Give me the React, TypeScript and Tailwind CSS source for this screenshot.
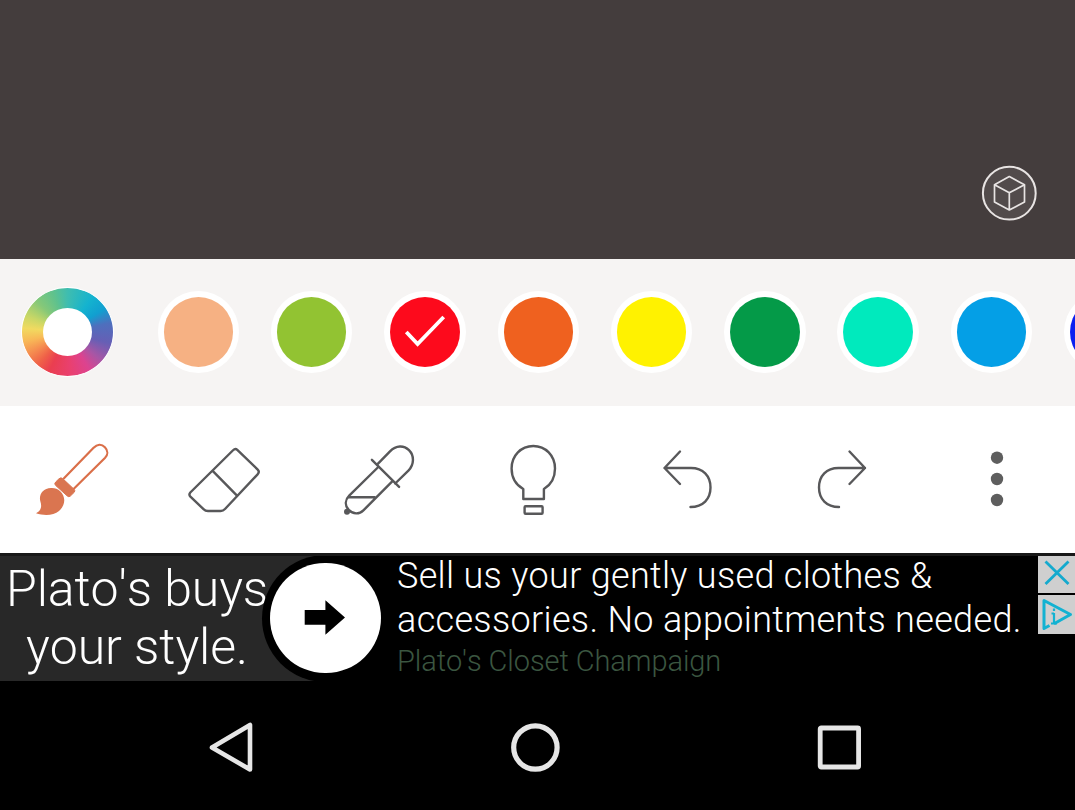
import type { ReactNode } from 'react';

const swatches = [
  { name: 'Peach', color: 'bg-[#f6b183]' },
  { name: 'Lime', color: 'bg-[#92c332]' },
  { name: 'Red', color: 'bg-[#fd0a1c]', selected: true },
  { name: 'Orange', color: 'bg-[#ef611f]' },
  { name: 'Yellow', color: 'bg-[#fff200]' },
  { name: 'Green', color: 'bg-[#049a48]' },
  { name: 'Mint', color: 'bg-[#00eabd]' },
  { name: 'Sky', color: 'bg-[#049fe6]' },
  { name: 'Blue', color: 'bg-[#0a1ff0]' },
];

function Tool({ label, children }: { label: string; children: ReactNode }) {
  return (
    <button aria-label={label} className="flex w-[154px] shrink-0 items-center justify-center">
      <svg
        width="90"
        height="90"
        viewBox="0 0 90 90"
        fill="none"
        stroke="#58585a"
        strokeWidth="2.4"
        strokeLinecap="round"
        strokeLinejoin="round"
      >
        {children}
      </svg>
    </button>
  );
}

function Canvas() {
  return (
    <main className="flex h-[259px] shrink-0 items-end justify-end bg-[#443d3d] pr-[38px] pb-[38px]">
      <button aria-label="3D view">
        <svg width="56" height="56" viewBox="0 0 56 56" fill="none" stroke="#e8e4e3" strokeLinejoin="round">
          <circle cx="28.3" cy="28.2" r="26.4" fill="#524b4b" strokeWidth="2" />
          <path d="M28.3 11.5 43.5 19.8V37L28.3 45 13.5 37V19.8ZM13.5 19.8 28.3 27.8 43.5 19.8M28.3 27.8V45" strokeWidth="1.7" />
        </svg>
      </button>
    </main>
  );
}

function Palette() {
  return (
    <section className="flex h-[147px] shrink-0 items-center overflow-hidden bg-[#f6f4f3] pb-[1px] pl-[21px]">
      <button
        aria-label="Color wheel"
        className="mr-[43.7px] flex h-[90px] w-[93px] shrink-0 items-center justify-center rounded-[50%] border border-white bg-[conic-gradient(from_0deg,#3fbdb0_0deg,#14b3cf_35deg,#119fd0_58deg,#4e6fbd_78deg,#665fb5_105deg,#a856a5_130deg,#dc438f_150deg,#e94070_175deg,#ea3e50_205deg,#ef6048_222deg,#f58c50_240deg,#f8b957_258deg,#f1da60_275deg,#c8d766_292deg,#86c878_315deg,#5fc28d_340deg,#3fbdb0_360deg)]"
      >
        <span className="h-[48px] w-[49px] rounded-[50%] bg-white" />
      </button>
      <div className="flex gap-[31.8px]">
        {swatches.map((s) => (
          <button
            key={s.name}
            aria-label={s.name}
            className="flex size-[81.5px] shrink-0 items-center justify-center rounded-full bg-white"
          >
            <span className={`flex size-[69.5px] items-center justify-center rounded-full ${s.color}`}>
              {s.selected && (
                <svg width="70" height="70" viewBox="0 0 70 70" fill="none" stroke="#fff" strokeWidth="3.8">
                  <path d="M16.4 35 27.8 47.2 54.1 19.9" />
                </svg>
              )}
            </span>
          </button>
        ))}
      </div>
    </section>
  );
}

function Toolbar() {
  return (
    <section className="-ml-[6px] flex h-[147px] w-[1081px] shrink-0 bg-white">
      <Tool label="Brush">
        <path
          d="M38 43.3 67.6 12.8C71.2 9.2 75.6 9 78.9 12.2C82.2 15.5 82 19.8 78.9 23L47.3 54.2"
          stroke="#da6f49"
          strokeWidth="2.2"
        />
        <path
          d="M33.2 43.6Q35 42 36.7 43.6L48.2 54.4Q49.5 55.8 48.2 57.3L44.3 61.1Q42.9 62.4 41.3 61L29.5 50.3Q28 48.9 29.4 47.3Z"
          fill="#da7550"
          stroke="#da7550"
          strokeWidth="1"
        />
        <path
          d="M25 53.1C16.5 53.3 12.5 60.5 14.4 66.5C16.6 73.5 13.5 76.5 10 78.2C18 80.9 27.6 80.6 33 76C39.6 70.3 40 61.6 34.2 56.2C31.6 53.7 28.5 52.9 25 53.1Z"
          fill="#da7550"
          stroke="none"
        />
      </Tool>
      <Tool label="Eraser">
        <path
          d="M54.5 16.6Q56.5 14.5 58.5 16.4L78.9 36.2Q81 38.3 79 40.7L46.2 75.6Q44.3 77.6 41.8 77.6H29.2Q26.6 77.6 24.7 75.7L11.6 63.3Q9.7 61.2 11.5 59.1ZM34.1 37.8 58.2 62.3"
          transform="translate(-1.2 -1.6)"
        />
      </Tool>
      <Tool label="Eyedropper">
        <path d="M43.3 29.3 56 16.3C62.2 10 70 10.2 75 15.2C80.4 20.6 80.3 29.5 74.4 35.7L61.2 48.5M44.3 32 15.2 60.7C11 64.9 10.6 70.4 14.7 74.9C19 79.4 25.2 79.6 29.4 75.4L58 46.7M15.3 62.3H40.5" />
        <path d="M37.9 24.8 65.1 51.9" />
        <circle cx="13" cy="76.8" r="1.8" fill="#58585a" />
      </Tool>
      <Tool label="Hints">
        <path
          d="M36 75V65C28.5 60.8 24.3 53.2 24.3 44.5C24.3 31.5 33.8 22 46 22S67.7 31.5 67.7 44.5C67.7 53.2 64 60.6 56.6 65V75Z"
          transform="translate(-.7 -11)"
        />
        <rect x="36.6" y="71.3" width="18" height="7.4" rx="1" />
      </Tool>
      <Tool label="Undo">
        <path d="M38 16.5 22.5 33 38 49M22.5 33H49C61 33 68.5 41 68.5 52.5S61 72 48.5 72" />
      </Tool>
      <Tool label="Redo">
        <path d="M53.5 16.5 69 33 53.5 49M69 33H42.5C30.5 33 23 41 23 52.5S30.5 72 43 72" />
      </Tool>
      <Tool label="More">
        <g fill="#5e5e5e" stroke="none">
          <circle cx="47" cy="22.7" r="6.2" />
          <circle cx="47" cy="44" r="6.2" />
          <circle cx="47" cy="65" r="6.2" />
        </g>
      </Tool>
    </section>
  );
}

function Banner() {
  return (
    <aside className="relative flex h-[128px] shrink-0 overflow-hidden border-t-[3px] border-[#191919] bg-black font-light text-white [font-kerning:none]">
      <div className="w-[325px] shrink-0 bg-[#282828] pt-[4px] pl-[6px] text-[50px] leading-[58px] whitespace-nowrap">
        <p className="tracking-[-0.1px]">Plato's buys</p>
        <p className="pl-[20px] leading-[59px] tracking-[-0.05px]">your style.</p>
      </div>
      <button aria-label="Open" className="absolute -top-[1.5px] left-[262px] flex size-[127px] items-center justify-center rounded-full bg-black">
        <span className="flex size-[110.5px] items-center justify-center rounded-full bg-white">
          <svg width="44" height="36" viewBox="0 0 44 36" fill="#000">
            <path d="M.7 10H21.4V.3L41 17.5 21.4 34.7V24.7H.7Z" />
          </svg>
        </span>
      </button>
      <div className="pl-[72px] whitespace-nowrap">
        <p className="-mt-[2px] text-[36px] leading-[44px] tracking-[0.31px]">Sell us your gently used clothes &amp;</p>
        <p className="text-[36px] leading-[44px] tracking-[0.33px]">accessories. No appointments needed.</p>
        <p className="text-[29px] leading-[39px] tracking-[-0.08px] text-[#3b5640]">Plato's Closet Champaign</p>
      </div>
      <div className="absolute -top-[3px] right-0 flex w-[37.5px] flex-col gap-[2px] bg-black">
        <button aria-label="Close ad" className="h-[40px] bg-[#cfcfcf]">
          <svg width="38" height="40" viewBox="0 0 38 40" stroke="#14aace" strokeWidth="2.8">
            <path d="M7.5 8.5 30.5 31M30.5 8.5 7.5 31" />
          </svg>
        </button>
        <button aria-label="Ad choices" className="h-[39px] bg-[#cfcfcf]">
          <svg width="38" height="39" viewBox="0 0 38 39" fill="none" stroke="#12b2d2" strokeWidth="3" strokeLinejoin="round">
            <path d="M11.5 30.5 6 33.5V5.5L32.5 19.5 16 28.7" />
            <path d="M16 18V29M16 13.5V16M13.5 18.5H16M13 28.5H19" strokeWidth="2.2" />
          </svg>
        </button>
      </div>
    </aside>
  );
}

function NavigationBar() {
  return (
    <nav className="flex flex-1 items-center justify-between bg-black pt-[1px] pr-[212px] pl-[208px]">
      <button aria-label="Back">
        <svg width="46" height="52" viewBox="0 0 46 52" fill="none" stroke="#e6e6e6" strokeWidth="4.6" strokeLinejoin="round">
          <path d="M42 5V49.5L4 27.5Z" />
        </svg>
      </button>
      <button aria-label="Home">
        <svg width="52" height="52" viewBox="0 0 52 52" fill="none" stroke="#e6e6e6" strokeWidth="5.2">
          <circle cx="25.4" cy="27.5" r="21.7" />
        </svg>
      </button>
      <button aria-label="Recents">
        <svg width="46" height="52" viewBox="0 0 46 52" fill="none" stroke="#e6e6e6" strokeWidth="4.8">
          <rect x="3.2" y="8" width="38.4" height="39" rx="1" />
        </svg>
      </button>
    </nav>
  );
}

export default function App() {
  return (
    <div className="flex h-[810px] w-[1075px] flex-col overflow-hidden bg-black font-['Roboto',sans-serif]">
      <Canvas />
      <Palette />
      <Toolbar />
      <Banner />
      <NavigationBar />
    </div>
  );
}
